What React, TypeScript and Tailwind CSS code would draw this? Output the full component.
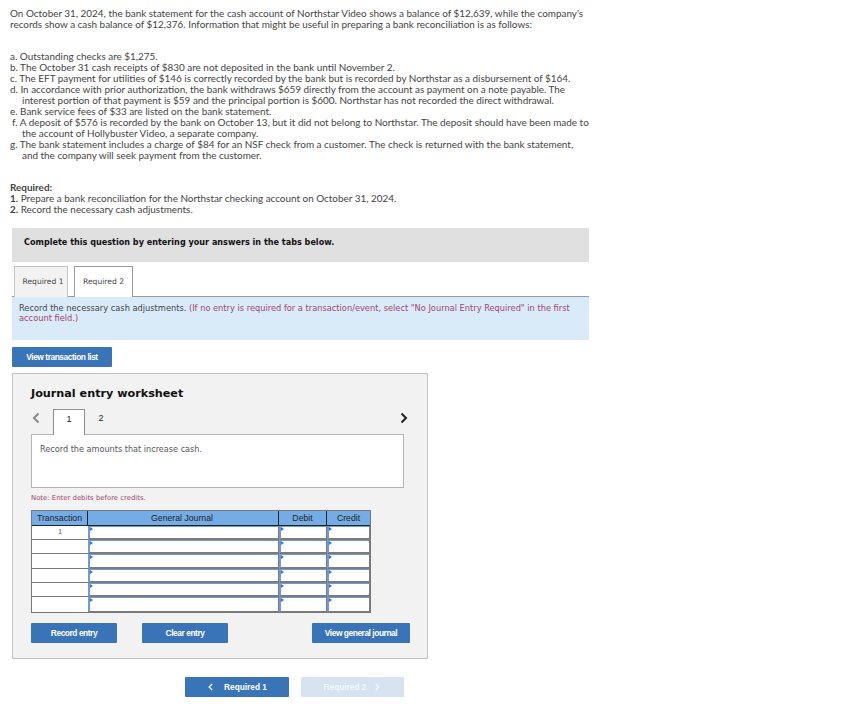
import React from "react";

const body = "font-['Lato','Noto_Sans',sans-serif]";
const verdana = "font-['DejaVu_Sans','Liberation_Sans',sans-serif]";
const arial = "font-['Liberation_Sans',Arial,sans-serif]";

function Chevron({ dir, className }: { dir: "l" | "r"; className: string }) {
  return (
    <svg viewBox="0 0 10 12" className={className} fill="none" stroke="currentColor" strokeWidth="2">
      <path d={dir === "l" ? "M7.5 1.5 3 6l4.5 4.5" : "M2.5 1.5 7 6l-4.5 4.5"} />
    </svg>
  );
}

function Btn({ w, children }: { w: string; children: React.ReactNode }) {
  return (
    <button className={`${w} block shrink-0 h-5 rounded-[1px] bg-[#3974b9] text-white text-[8.4px] font-bold tracking-[-0.45px] ${arial}`}>
      {children}
    </button>
  );
}

const rows = [0, 1, 2, 3, 4, 5];
const heights = ["h-[14px]", "h-[14px]", "h-[15px]", "h-[14px]", "h-[14px]", "h-[15px]"];

function Cell({ w, last }: { w: string; last?: boolean }) {
  return (
    <div className={`${w} relative h-full bg-white border-t border-t-[#6d9ad8] border-l-2 border-l-[#6d9ad8] ${last ? "border-b border-b-[#7c7c7c]" : "border-b-2 border-b-[#7c7c7c]"} border-r border-r-[#7c7c7c]`}>
      <span className="absolute left-0 top-0 w-0 h-0 border-y-[2px] border-l-[3px] border-y-transparent border-l-[#3974b9]" />
    </div>
  );
}

export default function App() {
  return (
    <div className={`w-[852px] h-[717px] bg-white overflow-hidden pt-[8px] ${body} text-[#444]`}>
      <div className="pl-[10px] w-[620px] text-[9.92px] leading-[11px]">
        <p>On October 31, 2024, the bank statement for the cash account of Northstar Video shows a balance of $12,639, while the company's</p>
        <p>records show a cash balance of $12,376. Information that might be useful in preparing a bank reconciliation is as follows:</p>
        <div className="mt-[21px]">
          <p>a. Outstanding checks are $1,275.</p>
          <p>b. The October 31 cash receipts of $830 are not deposited in the bank until November 2.</p>
          <p>c. The EFT payment for utilities of $146 is correctly recorded by the bank but is recorded by Northstar as a disbursement of $164.</p>
          <p>d. In accordance with prior authorization, the bank withdraws $659 directly from the account as payment on a note payable. The</p>
          <p className="pl-3">interest portion of that payment is $59 and the principal portion is $600. Northstar has not recorded the direct withdrawal.</p>
          <p>e. Bank service fees of $33 are listed on the bank statement.</p>
          <p className="pl-[2px]">f. A deposit of $576 is recorded by the bank on October 13, but it did not belong to Northstar. The deposit should have been made to</p>
          <p className="pl-3">the account of Hollybuster Video, a separate company.</p>
          <p>g. The bank statement includes a charge of $84 for an NSF check from a customer. The check is returned with the bank statement,</p>
          <p className="pl-3">and the company will seek payment from the customer.</p>
        </div>
        <div className="mt-[21px]">
          <p className="font-bold">Required:</p>
          <p><b>1.</b> Prepare a bank reconciliation for the Northstar checking account on October 31, 2024.</p>
          <p><b>2.</b> Record the necessary cash adjustments.</p>
        </div>
      </div>

      <div className="ml-3 w-[577px] mt-[13px]">
        <div className={`h-[34px] bg-[#e0e0e0] pl-3 pt-[9px] text-[8.1px] leading-[11px] font-bold text-[#111] ${verdana}`}>
          Complete this question by entering your answers in the tabs below.
        </div>
        <div className={`flex gap-[6px] pl-[2px] pt-[4px] h-[35px] border-b border-[#9a9a9a] text-[7.6px] ${verdana}`}>
          <div className="w-[54px] h-[31px] bg-[#f2f2f2] border border-[#c4c4c4] border-b-0 flex items-center justify-center pl-[4px] text-[#444]">Required 1</div>
          <div className="w-[59px] h-[31px] bg-white border border-[#9a9a9a] border-b-0 flex items-center justify-center text-[#444]">Required 2</div>
        </div>
        <div className={`h-[43px] bg-[#d9ebf9] px-[7px] pt-[6px] text-[8.25px] leading-[10px] text-[#444] ${verdana}`}>
          Record the necessary cash adjustments. <span className="text-[#a5446f]">(If no entry is required for a transaction/event, select "No Journal Entry Required" in the first account field.)</span>
        </div>
        <div className="mt-[7px]"><Btn w="w-[100px]">View transaction list</Btn></div>
      </div>

      <div className={`ml-3 mt-[6px] w-[416px] h-[286px] bg-[#f2f2f2] border border-[#c4c4c4] pl-[18px] pr-[17px] ${verdana}`}>
        <h2 className="mt-[13px] text-[11.2px] leading-[14px] font-bold text-[#111]">Journal entry worksheet</h2>
        <div className={`relative flex items-end h-[25px] mt-[8px] text-[9px] text-[#222] ${arial}`}>
          <Chevron dir="l" className="w-[10px] h-3 text-[#8a8a8a] mb-[10px]" />
          <div className="ml-3 w-[32px] h-[26px] -mb-px z-10 bg-white border border-[#8f8f8f] border-b-0 flex justify-center pt-[3px]">1</div>
          <div className="w-[32px] h-[25px] flex justify-center pt-[3px]">2</div>
          <Chevron dir="r" className="absolute right-[1px] top-[3px] w-[10px] h-3 text-[#222]" />
        </div>
        <div className="w-[373px] h-[54px] bg-white border border-[#b5b5b5] pl-2 pt-[9px] text-[8.15px] leading-[10px] text-[#555]">
          Record the amounts that increase cash.
        </div>
        <p className="mt-[6px] text-[6.9px] leading-[9px] text-[#a5446f]">Note: Enter debits before credits.</p>

        <div className={`mt-[7px] w-[340px] border border-[#777] text-[8.7px] text-[#222] ${arial}`}>
          <div className="flex h-[15px] bg-[#74ace6] border-b border-[#222] leading-[14px] text-center">
            <div className="w-[56px] border-r border-[#222]">Transaction</div>
            <div className="w-[191px] border-r border-[#222] pr-[2px]">General Journal</div>
            <div className="w-[48px] border-r border-[#222]">Debit</div>
            <div className="flex-1">Credit</div>
          </div>
          {rows.map((r) => (
            <div key={r} className={`flex ${heights[r]}`}>
              <div className={`w-[56px] h-full bg-white text-center text-[7.5px] leading-[11px] text-[#666] ${r < 5 ? "border-b border-[#777]" : ""}`}>
                {r === 0 ? "1" : ""}
              </div>
              <Cell w="w-[191px]" last={r === 5} />
              <Cell w="w-[48px]" last={r === 5} />
              <Cell w="flex-1" last={r === 5} />
            </div>
          ))}
        </div>

        <div className="flex mt-[10px]">
          <Btn w="w-[86px]">Record entry</Btn>
          <div className="ml-[25px]"><Btn w="w-[86px]">Clear entry</Btn></div>
          <div className="ml-[84px]"><Btn w="w-[98px]">View general journal</Btn></div>
        </div>
      </div>

      <div className={`flex ml-[185px] mt-[18px] gap-3 text-[8.3px] font-bold ${arial}`}>
        <button className="w-[104px] h-5 rounded-[1px] bg-[#3974b9] text-white flex items-center justify-center gap-[10px]">
          <Chevron dir="l" className="w-[7px] h-2" /> Required 1
        </button>
        <button className="w-[103px] h-5 rounded-[1px] bg-[#d7e3f1] text-[#f4f7fb] flex items-center justify-center gap-[8px]">
          Required 2 <Chevron dir="r" className="w-[7px] h-2" />
        </button>
      </div>
    </div>
  );
}
